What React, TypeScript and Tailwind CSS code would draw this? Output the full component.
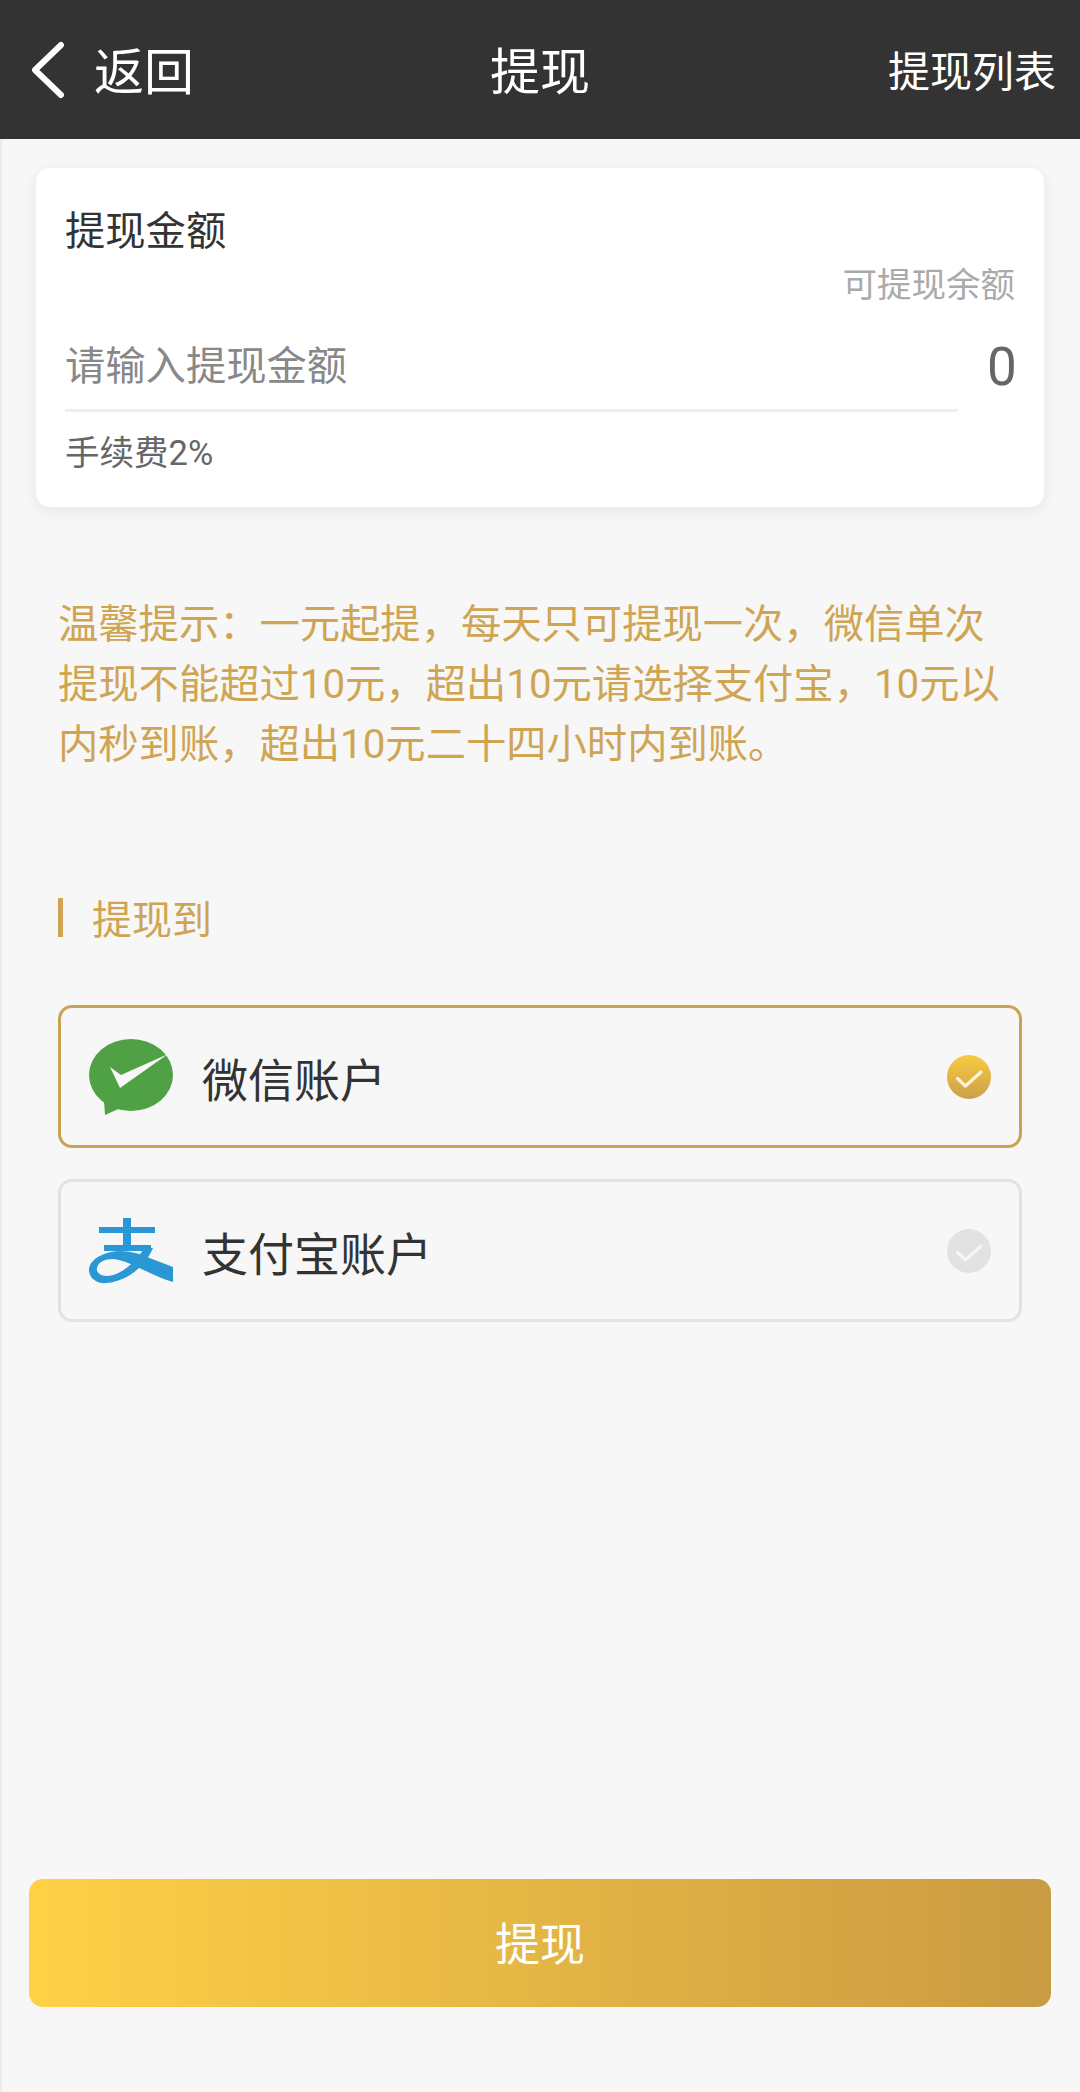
import React from "react";

function CheckBadge({ active }: { active: boolean }) {
  return (
    <div
      className={
        active
          ? "flex h-[44px] w-[44px] items-center justify-center rounded-full bg-gradient-to-b from-[#f8cb40] to-[#cc9f4a]"
          : "flex h-[44px] w-[44px] items-center justify-center rounded-full bg-[#e2e2e2]"
      }
    >
      <svg width="44" height="44" viewBox="0 0 44 44" fill="none">
        <path d="M10.5 23.5 L18.5 31 L34 17" stroke={active ? "#fdf3d8" : "#f5f5f5"} strokeWidth="3.2" strokeLinecap="round" strokeLinejoin="round" />
      </svg>
    </div>
  );
}

function WeChatLogo() {
  return (
    <svg width="84" height="76" viewBox="0 0 84 76" className="block">
      <ellipse cx="42" cy="36" rx="42" ry="36" fill="#50a045" />
      <path d="M15 62 L16 76 L34 68 Z" fill="#50a045" />
      <path d="M21 28 L32 36 L79 15 L31 49 Z" fill="#f7f7f7" />
    </svg>
  );
}

function AlipayLogo() {
  return (
    <svg width="84" height="68" viewBox="0 0 84 68" className="block">
      <g fill="#2a98d4">
        <rect x="10" y="10" width="56" height="6" />
        <rect x="34" y="1" width="8" height="27" />
        <rect x="15" y="28" width="47" height="6" />
        <path d="M84 50 L50 37 C40 34 30 33 22 35 C8 38 -1 46 0 54 C1 63 10 67 18 66 C38 64 56 50 64 31 L55 31 C47 46 30 59 18 59 C11 59 7 55 8 51 C9 45 16 42 24 42 C40 43 60 58 84 65 Z" />
      </g>
    </svg>
  );
}

function PayOption({ active, label, children }: { active: boolean; label: string; children: React.ReactNode }) {
  return (
    <div
      className={
        active
          ? "flex h-[143px] items-center rounded-[14px] border-[3px] border-[#c9a456] pl-[28px] pr-[28px]"
          : "flex h-[143px] items-center rounded-[14px] border-[3px] border-[#e2e2e2] pl-[28px] pr-[28px]"
      }
    >
      <div className="flex w-[84px] shrink-0 items-center justify-center">{children}</div>
      <div className="ml-[29px] flex-1 pt-[8px] text-[46px] leading-[60px] text-[#333333]">{label}</div>
      <CheckBadge active={active} />
    </div>
  );
}

export default function App() {
  return (
    <div className="flex min-h-[2092px] w-[1080px] flex-col border-l-2 border-[#ececec] bg-[#f7f7f7] font-['Roboto','Noto_Sans_CJK_SC',sans-serif]">
      <header className="-ml-[2px] grid h-[139px] w-[1080px] shrink-0 grid-cols-3 items-center bg-[#333333] text-white">
        <div className="flex items-center pl-[30px]">
          <svg width="36" height="58" viewBox="0 0 36 58" fill="none">
            <path d="M31 4 L5 29 L31 54" stroke="#ffffff" strokeWidth="6" strokeLinecap="round" strokeLinejoin="round" />
          </svg>
          <span className="ml-[28px] pt-[6px] text-[50px] leading-[60px]">返回</span>
        </div>
        <div className="pt-[6px] text-center text-[50px] leading-[60px]">提现</div>
        <div className="pr-[24px] pt-[6px] text-right text-[42px] leading-[60px]">提现列表</div>
      </header>

      <main className="flex flex-1 flex-col">
        <section className="ml-[34px] mt-[29px] w-[1008px] rounded-[14px] bg-white pb-[34px] pl-[29px] pr-[29px] pt-[34px] shadow-[0_4px_16px_rgba(0,0,0,0.07)]">
          <div className="text-[40.3px] leading-[60px] text-[#333333]">提现金额</div>
          <div className="mt-[3px] text-right text-[34.5px] leading-[40px] text-[#aaaaaa]">可提现余额</div>
          <div className="mt-[32px] flex items-start">
            <div className="flex-1 border-b-[3px] border-[#eeeeee] pb-[12px] text-[40.3px] leading-[60px] text-[#888888]">请输入提现金额</div>
            <div className="ml-[29px] mr-[1px] w-[27px] text-right text-[53px] leading-[60px] text-[#666666]">0</div>
          </div>
          <div className="mt-[21px] text-[34.5px] leading-[40px] text-[#666666]">手续费2%</div>
        </section>

        <p className="ml-[56px] mt-[88px] w-[950px] text-[40.3px] leading-[60px] text-[#cfa553]">
          温馨提示：一元起提，每天只可提现一次，微信单次提现不能超过10元，超出10元请选择支付宝，10元以内秒到账，超出10元二十四小时内到账。
        </p>

        <div className="ml-[56px] mt-[123px] flex h-[39px] items-center border-l-[5px] border-[#cfa553] pl-[29px] text-[40px] leading-[39px] text-[#cfa553]">
          <span className="pt-[5px]">提现到</span>
        </div>

        <div className="ml-[56px] mt-[68px] flex w-[964px] flex-col gap-[31px]">
          <PayOption active label="微信账户">
            <WeChatLogo />
          </PayOption>
          <PayOption active={false} label="支付宝账户">
            <AlipayLogo />
          </PayOption>
        </div>

        <button className="mb-[85px] ml-[27px] mt-auto h-[128px] w-[1022px] rounded-[14px] bg-gradient-to-r from-[#ffd146] to-[#c99b42] pt-[6px] text-[45px] text-white">
          提现
        </button>
      </main>
    </div>
  );
}
